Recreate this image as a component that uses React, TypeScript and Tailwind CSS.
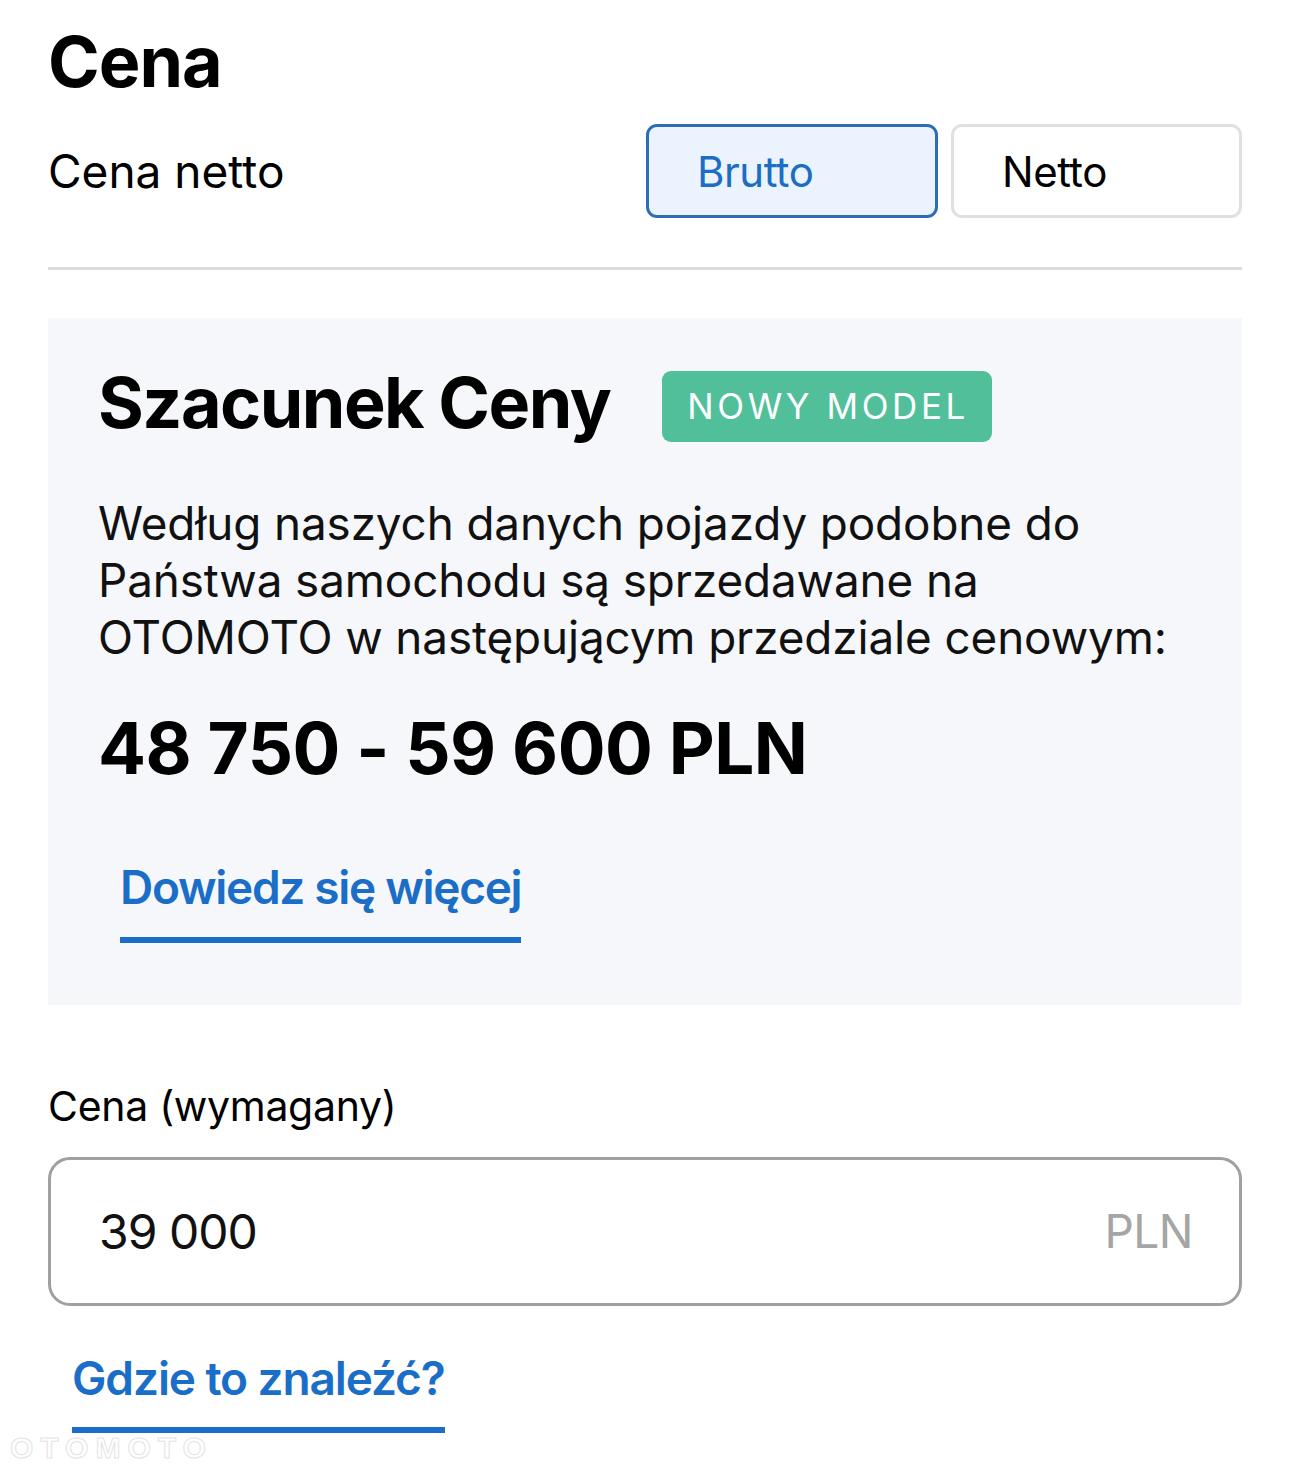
export default function App() {
  return (
    <div className="relative min-h-[1471px] bg-white px-[48px] pt-[22px] font-['Inter',sans-serif] text-black">
      <h1 className="text-[70px] font-bold leading-[80px] tracking-[-1px]">Cena</h1>

      <div className="mt-[22px] flex items-center justify-between">
        <span className="text-[46px] leading-[54px]">Cena netto</span>
        <div className="flex gap-[13px]">
          <button className="h-[94px] w-[292px] rounded-[11px] border-[3px] border-[#2d6db5] bg-[#ebf4fe] pl-[48px] text-left text-[42px] tracking-[-0.5px] text-[#1c6dc4]">
            Brutto
          </button>
          <button className="h-[94px] w-[291px] rounded-[11px] border-[3px] border-[#e0e0e0] bg-white pl-[48px] text-left text-[42px] tracking-[-0.5px] text-black">
            Netto
          </button>
        </div>
      </div>

      <div className="mt-[49px] h-[3px] bg-[#dcdcdc]" />

      <div className="mt-[48px] bg-[#f5f7fa] pb-[62px] pl-[50px] pr-[40px] pt-[45px]">
        <div className="flex items-start gap-[52px]">
          <h2 className="text-[70px] font-bold leading-[80px] tracking-[-1.5px]">Szacunek Ceny</h2>
          <span className="mt-[8px] flex h-[71px] items-center rounded-[9px] bg-[#52bf9b] pl-[25px] pr-[23px] text-[35px] tracking-[3.6px] text-white">
            NOWY MODEL
          </span>
        </div>

        <p className="mt-[52px] text-[45.8px] leading-[57px] tracking-[-0.1px] text-[#111]">
          Według naszych danych pojazdy podobne do
          <br />
          Państwa samochodu są sprzedawane na
          <br />
          OTOMOTO w następującym przedziale cenowym:
        </p>

        <div className="mt-[42px] text-[71px] font-bold leading-[80px] tracking-[-0.5px]">
          48 750 - 59 600 PLN
        </div>

        <div className="mt-[71px] pl-[22px]">
          <a className="inline-block border-b-[6px] border-[#1b6ec8] pb-[22px] text-[46px] font-semibold leading-[56px] tracking-[-1.3px] text-[#1b6ec8]">
            Dowiedz się więcej
          </a>
        </div>
      </div>

      <div className="mt-[76px] text-[41px] leading-[50px] tracking-[-0.3px]">Cena (wymagany)</div>

      <div className="mt-[26px] flex h-[149px] items-center justify-between rounded-[22px] border-[3px] border-[#a0a0a0] pl-[48px] pr-[46px]">
        <span className="text-[48px] tracking-[-1px] text-[#111]">39 000</span>
        <span className="text-[46px] tracking-[-0.5px] text-[#a5a5a5]">PLN</span>
      </div>

      <div className="mt-[44px] pl-[24px]">
        <a className="inline-block border-b-[6px] border-[#1b6ec8] pb-[21px] text-[46px] font-semibold leading-[56px] tracking-[-1.1px] text-[#1b6ec8]">
          Gdzie to znaleźć?
        </a>
      </div>

      <div
        className="absolute left-[10px] top-[1430px] font-['Liberation_Sans',Arial,sans-serif] text-[30px] font-bold leading-[36px] tracking-[7px] text-white"
        style={{ WebkitTextStroke: "1px #e4e4e4" }}
      >
        OTOMOTO
      </div>
    </div>
  );
}
